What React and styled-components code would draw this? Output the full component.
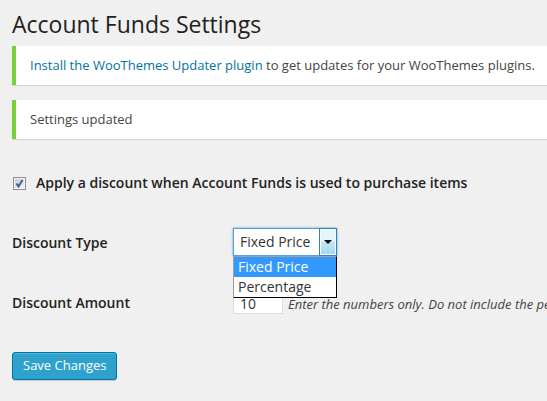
import React, { useState } from "react";
import styled, { createGlobalStyle } from "styled-components";

const GlobalStyle = createGlobalStyle`
  *, *::before, *::after { box-sizing: border-box; }
  body {
    margin: 0;
    background: #f0f0f0;
    color: #444;
    font: 13px/20px "Open Sans", sans-serif;
    overflow-x: hidden;
  }
`;

const Page = styled.main`
  padding: 8px 0 20px 12px;
  overflow: hidden;
`;

const Title = styled.h1`
  margin: 0 0 6px;
  font-size: 23px;
  font-weight: 400;
  line-height: 32px;
  color: #222;
`;

const Notice = styled.div`
  margin-bottom: 15px;
  padding: 9px 14px 10px;
  border-left: 4px solid #7ad03a;
  background: #fff;
  box-shadow: 0 1px 1px rgba(0, 0, 0, 0.1);
  white-space: nowrap;
`;

const Link = styled.a`
  color: #0074a2;
  text-decoration: none;
`;

const Form = styled.form`
  padding-top: 18px;
`;

const Toggle = styled.label`
  display: flex;
  align-items: center;
  gap: 10px;
  height: 22px;
  margin-bottom: 34px;
  padding-left: 1px;
  font-size: 14px;
  font-weight: 600;
  color: #222;
`;

const CheckFrame = styled.span`
  display: grid;
  width: 13px;
  height: 13px;

  > * {
    grid-area: 1 / 1;
  }

  svg {
    pointer-events: none;
  }

  input:not(:checked) + svg {
    visibility: hidden;
  }
`;

const Checkbox = styled.input`
  appearance: none;
  width: 13px;
  height: 13px;
  margin: 0;
  border: 1px solid #8e8f8f;
  background: linear-gradient(135deg, #c3c8ce, #f4f5f6);
  box-shadow: inset 0 0 0 1px #f4f4f4;
`;

const Rows = styled.div`
  display: grid;
  gap: 30px;
  margin-bottom: 34px;
`;

const Row = styled.div`
  display: grid;
  grid-template-columns: 221px 1fr;
  height: 30px;
`;

const Label = styled.label`
  align-self: center;
  font-size: 14px;
  font-weight: 600;
  color: #222;
`;

const Field = styled.div`
  display: flex;
  align-items: baseline;
  gap: 5px;
  min-width: 0;
`;

const Combo = styled.div`
  position: relative;
  display: grid;
  grid-template-columns: 1fr 18px;
  width: 104px;
  height: 28px;
`;

const Select = styled.select`
  grid-area: 1 / 1 / 2 / 3;
  appearance: none;
  width: 100%;
  margin: 0;
  padding: 0 20px 0 6px;
  border: 1px solid #5b9dd9;
  border-radius: 0;
  outline: 0;
  background: #fff;
  box-shadow: 0 0 2px rgba(30, 140, 190, 0.8);
  color: #333;
  font: 14px/20px "Open Sans", sans-serif;
`;

const Arrow = styled.span`
  grid-area: 1 / 2;
  z-index: 1;
  display: grid;
  place-items: center;
  border: 1px solid #3c7fb1;
  background: linear-gradient(#e5f4fc 45%, #c4e5f6 50%, #a5d6f0);
  box-shadow: inset 0 0 0 1px #f4fbff;
  pointer-events: none;
`;

const Menu = styled.ul`
  position: absolute;
  top: 100%;
  left: 0;
  z-index: 2;
  width: 100%;
  margin: 0;
  padding: 0;
  border: 1px solid #000;
  border-top-color: #a0a0a0;
  border-left-color: #a0a0a0;
  background: #fff;
  list-style: none;
`;

const Option = styled.li`
  padding: 0 4px;
  background: ${(p) => (p.$active ? "#3399ff" : "#fff")};
  color: ${(p) => (p.$active ? "#fff" : "#333")};
  font-size: 14px;
  line-height: 20px;
  cursor: default;
`;

const Amount = styled.input`
  flex: none;
  width: 50px;
  height: 26px;
  margin: 0;
  padding: 4px 6px 0;
  border: 1px solid #ddd;
  background: #fff;
  color: #333;
  font: 14px/20px "Open Sans", sans-serif;
`;

const Hint = styled.em`
  font-size: 13px;
  white-space: nowrap;
`;

const SaveButton = styled.button`
  display: block;
  height: 28px;
  padding: 0 10px 1px;
  border: 1px solid #0074a2;
  border-radius: 3px;
  background: #2ea2cc;
  box-shadow: inset 0 1px 0 rgba(120, 200, 230, 0.5), 0 1px 0 rgba(0, 0, 0, 0.15);
  color: #fff;
  font: 13px/25px "Open Sans", sans-serif;
`;

const types = ["Fixed Price", "Percentage"];

export default function App() {
  const [type, setType] = useState(types[0]);
  const [open, setOpen] = useState(true);

  return (
    <>
      <GlobalStyle />
      <Page>
        <Title>Account Funds Settings</Title>
        <Notice>
          <Link href="#updater">Install the WooThemes Updater plugin</Link> to get
          updates for your WooThemes plugins.
        </Notice>
        <Notice>Settings updated</Notice>

        <Form onSubmit={(e) => e.preventDefault()}>
          <Toggle>
            <CheckFrame>
              <Checkbox type="checkbox" defaultChecked />
              <svg width="13" height="13" viewBox="0 0 13 13" aria-hidden="true">
                <path d="M3.5 6.5 L5.5 9.5 L9.5 3" fill="none" stroke="#45599c" strokeWidth="2" />
              </svg>
            </CheckFrame>
            Apply a discount when Account Funds is used to purchase items
          </Toggle>

          <Rows>
            <Row>
              <Label htmlFor="discount-type">Discount Type</Label>
              <Field>
                <Combo>
                  <Select
                    id="discount-type"
                    value={type}
                    onMouseDown={(e) => {
                      e.preventDefault();
                      setOpen(!open);
                    }}
                    onChange={(e) => setType(e.target.value)}
                  >
                    {types.map((t) => (
                      <option key={t}>{t}</option>
                    ))}
                  </Select>
                  <Arrow>
                    <svg width="8" height="4" viewBox="0 0 8 4" aria-hidden="true">
                      <path d="M0 0h8L4 4z" fill="#000" />
                    </svg>
                  </Arrow>
                  {open && (
                    <Menu role="listbox" aria-label="Discount Type">
                      {types.map((t) => (
                        <Option
                          key={t}
                          role="option"
                          aria-selected={t === type}
                          $active={t === type}
                          onClick={() => {
                            setType(t);
                            setOpen(false);
                          }}
                        >
                          {t}
                        </Option>
                      ))}
                    </Menu>
                  )}
                </Combo>
              </Field>
            </Row>

            <Row>
              <Label htmlFor="discount-amount">Discount Amount</Label>
              <Field>
                <Amount id="discount-amount" type="text" defaultValue="10" aria-describedby="amount-hint" />
                <Hint id="amount-hint">
                  Enter the numbers only. Do not include the percentage sign.
                </Hint>
              </Field>
            </Row>
          </Rows>

          <SaveButton type="submit">Save Changes</SaveButton>
        </Form>
      </Page>
    </>
  );
}
